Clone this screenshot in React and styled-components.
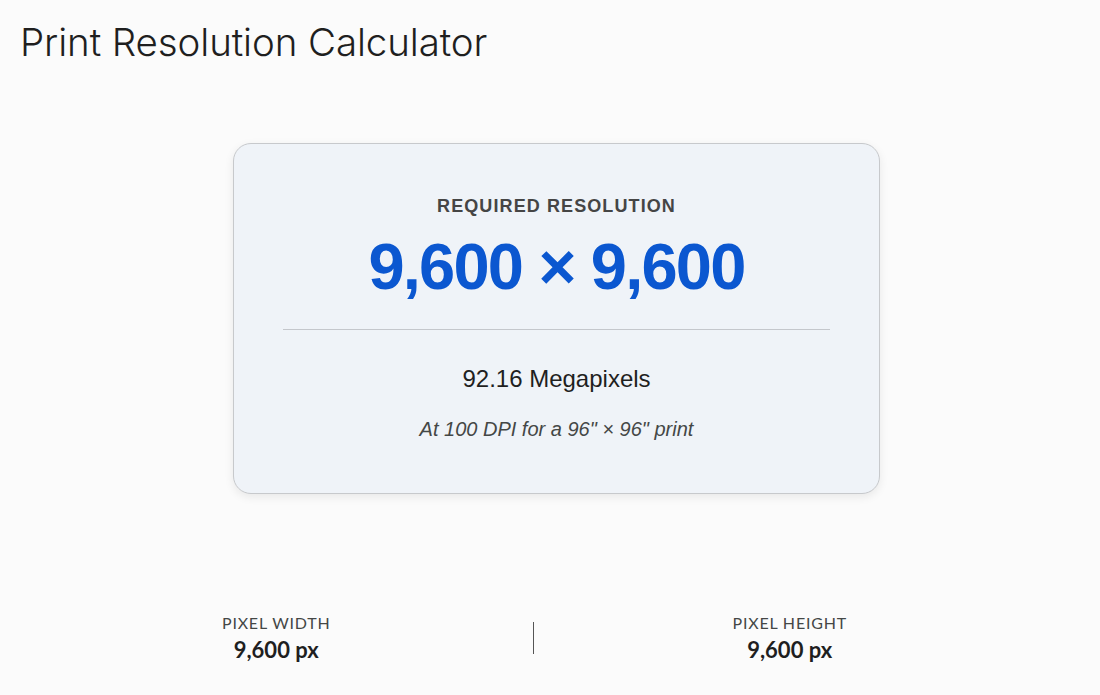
import React from "react";
import styled, { createGlobalStyle } from "styled-components";

const GlobalStyle = createGlobalStyle`
  html, body {
    margin: 0;
    padding: 0;
    background: #fbfbfb;
  }
  body {
    font-family: "Lato", "Open Sans", sans-serif;
    color: #1f1f1f;
  }
`;

const Page = styled.div`
  padding: 20px 54px 0 20px;
  display: flex;
  flex-direction: column;
`;

const Title = styled.h1`
  margin: 0;
  font-family: "Inter", "Lato", sans-serif;
  font-size: 38.5px;
  font-weight: 300;
  line-height: 44px;
  letter-spacing: -0.1px;
  color: #1f1f1f;
`;

const CardRow = styled.div`
  display: flex;
  justify-content: center;
  padding: 79px 0 0 47px;
`;

const Card = styled.section`
  width: 547px;
  padding: 51px 49px 52px;
  background: #eff3f8;
  border: 1px solid #c7c9cc;
  border-radius: 18px;
  box-shadow: 0 3px 10px rgba(0, 0, 0, 0.08);
  display: flex;
  flex-direction: column;
  align-items: center;
  font-family: "Liberation Sans", Arial, sans-serif;
`;

const Eyebrow = styled.div`
  font-size: 18px;
  font-weight: 700;
  letter-spacing: 1.1px;
  color: #454545;
  line-height: 22px;
`;

const Resolution = styled.div`
  margin-top: 12px;
  font-size: 65px;
  font-weight: 700;
  line-height: 76px;
  letter-spacing: -1.8px;
  color: #0b57d0;
`;

const Rule = styled.hr`
  align-self: stretch;
  margin: 24px 0 0;
  border: none;
  border-top: 1px solid #c4c7cc;
`;

const Megapixels = styled.div`
  margin-top: 35px;
  font-size: 24px;
  line-height: 28px;
  color: #1f1f1f;
`;

const Note = styled.div`
  margin-top: 24px;
  font-size: 20px;
  font-style: italic;
  line-height: 24px;
  color: #444746;
`;

const Stats = styled.div`
  margin-top: 119px;
  display: grid;
  grid-template-columns: 1fr auto 1fr;
  align-items: center;
`;

const Stat = styled.div`
  display: flex;
  flex-direction: column;
  align-items: center;
`;

const StatLabel = styled.div`
  font-size: 16px;
  letter-spacing: 0.8px;
  color: #444746;
  line-height: 20px;
`;

const StatValue = styled.div`
  margin-top: 4px;
  font-size: 22px;
  font-weight: 700;
  color: #1f1f1f;
  line-height: 26px;
`;

const StatDivider = styled.div`
  width: 1px;
  height: 32px;
  background: #555;
`;

export default function App() {
  const width = 9600;
  const height = 9600;
  const fmt = (n) => n.toLocaleString("en-US");
  const mp = ((width * height) / 1e6).toFixed(2);

  return (
    <>
      <GlobalStyle />
      <Page>
        <Title>Print Resolution Calculator</Title>
        <CardRow>
          <Card>
            <Eyebrow>REQUIRED RESOLUTION</Eyebrow>
            <Resolution>
              {fmt(width)} × {fmt(height)}
            </Resolution>
            <Rule />
            <Megapixels>{mp} Megapixels</Megapixels>
            <Note>At 100 DPI for a 96" × 96" print</Note>
          </Card>
        </CardRow>
        <Stats>
          <Stat>
            <StatLabel>PIXEL WIDTH</StatLabel>
            <StatValue>{fmt(width)} px</StatValue>
          </Stat>
          <StatDivider />
          <Stat>
            <StatLabel>PIXEL HEIGHT</StatLabel>
            <StatValue>{fmt(height)} px</StatValue>
          </Stat>
        </Stats>
      </Page>
    </>
  );
}
